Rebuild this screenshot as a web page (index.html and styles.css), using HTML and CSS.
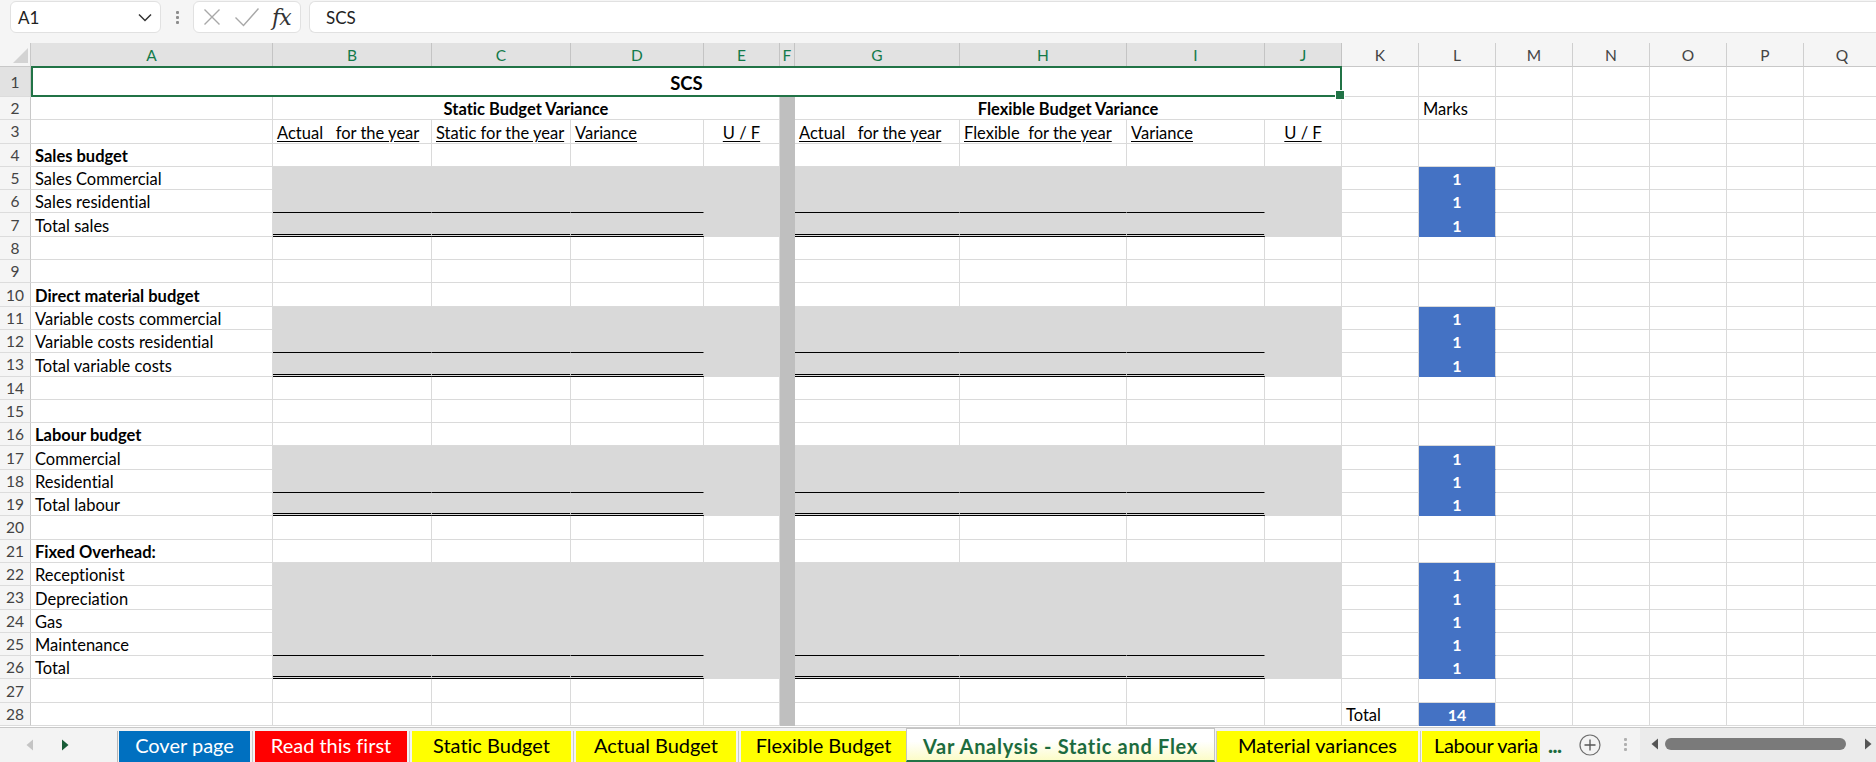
FILE: index.html
```html
<!DOCTYPE html>
<html>
<head>
<meta charset="utf-8">
<link rel="stylesheet" href="styles.css">
</head>
<body>
<div class="topbar">
  <div class="namebox"><span>A1</span><svg width="14" height="9" viewBox="0 0 14 9"><path d="M1 1.5 L7 7.5 L13 1.5" fill="none" stroke="#333" stroke-width="1.5"/></svg></div>
  <div class="grip"><i></i><i></i><i></i></div>
  <div class="fxbox">
    <svg class="ic-x" width="18" height="18" viewBox="0 0 18 18"><path d="M1.5 1.5 L16.5 16.5 M16.5 1.5 L1.5 16.5" fill="none" stroke="#a8a8a8" stroke-width="1.4"/></svg>
    <svg class="ic-ok" width="24" height="20" viewBox="0 0 24 20"><path d="M0.5 10.5 L8.5 18.5 L23.5 1.5" fill="none" stroke="#a8a8a8" stroke-width="1.4"/></svg>
    <span class="fx">fx</span>
  </div>
  <div class="formula">SCS</div>
</div>

<div class="sheet">
  <div class="corner"><svg width="30" height="23" viewBox="0 0 30 23"><path d="M28 5 L28 20 L13 20 Z" fill="#d3d3d3"/></svg></div>
  <div class="ch sel">A</div><div class="ch sel">B</div><div class="ch sel">C</div><div class="ch sel">D</div><div class="ch sel">E</div><div class="ch sel">F</div><div class="ch sel">G</div><div class="ch sel">H</div><div class="ch sel">I</div><div class="ch sel">J</div>
  <div class="ch">K</div><div class="ch">L</div><div class="ch">M</div><div class="ch">N</div><div class="ch">O</div><div class="ch">P</div><div class="ch">Q</div>

  <div class="rh rsel">1</div><div class="title">SCS</div><div></div><div></div><div></div><div></div><div></div><div></div><div></div>

  <div class="rh">2</div><div></div><div class="s4 b ctr">Static Budget Variance</div><div class="f"></div><div class="s4 b ctr">Flexible Budget Variance</div><div></div><div>Marks</div><div></div><div></div><div></div><div></div><div></div>

  <div class="rh">3</div><div></div><div class="u">Actual   for the year</div><div class="u">Static for the year</div><div class="u">Variance</div><div class="u ctr">U / F</div><div class="f"></div><div class="u">Actual   for the year</div><div class="u">Flexible  for the year</div><div class="u">Variance</div><div class="u ctr">U / F</div><div></div><div></div><div></div><div></div><div></div><div></div><div></div>

  <div class="rh">4</div><div class="b">Sales budget</div><div></div><div></div><div></div><div></div><div class="f"></div><div></div><div></div><div></div><div></div><div></div><div></div><div></div><div></div><div></div><div></div><div></div>

  <div class="rh">5</div><div>Sales Commercial</div><div class="g"></div><div class="g"></div><div class="g"></div><div class="g"></div><div class="f"></div><div class="g"></div><div class="g"></div><div class="g"></div><div class="g"></div><div></div><div class="m">1</div><div></div><div></div><div></div><div></div><div></div>

  <div class="rh">6</div><div>Sales residential</div><div class="g t"></div><div class="g t"></div><div class="g t"></div><div class="g"></div><div class="f"></div><div class="g t"></div><div class="g t"></div><div class="g t"></div><div class="g"></div><div></div><div class="m">1</div><div></div><div></div><div></div><div></div><div></div>

  <div class="rh">7</div><div>Total sales</div><div class="g d"></div><div class="g d"></div><div class="g d"></div><div class="g"></div><div class="f"></div><div class="g d"></div><div class="g d"></div><div class="g d"></div><div class="g"></div><div></div><div class="m">1</div><div></div><div></div><div></div><div></div><div></div>

  <div class="rh">8</div><div></div><div></div><div></div><div></div><div></div><div class="f"></div><div></div><div></div><div></div><div></div><div></div><div></div><div></div><div></div><div></div><div></div><div></div>

  <div class="rh">9</div><div></div><div></div><div></div><div></div><div></div><div class="f"></div><div></div><div></div><div></div><div></div><div></div><div></div><div></div><div></div><div></div><div></div><div></div>

  <div class="rh">10</div><div class="b">Direct material budget</div><div></div><div></div><div></div><div></div><div class="f"></div><div></div><div></div><div></div><div></div><div></div><div></div><div></div><div></div><div></div><div></div><div></div>

  <div class="rh">11</div><div>Variable costs commercial</div><div class="g"></div><div class="g"></div><div class="g"></div><div class="g"></div><div class="f"></div><div class="g"></div><div class="g"></div><div class="g"></div><div class="g"></div><div></div><div class="m">1</div><div></div><div></div><div></div><div></div><div></div>

  <div class="rh">12</div><div>Variable costs residential</div><div class="g t"></div><div class="g t"></div><div class="g t"></div><div class="g"></div><div class="f"></div><div class="g t"></div><div class="g t"></div><div class="g t"></div><div class="g"></div><div></div><div class="m">1</div><div></div><div></div><div></div><div></div><div></div>

  <div class="rh">13</div><div>Total variable costs</div><div class="g d"></div><div class="g d"></div><div class="g d"></div><div class="g"></div><div class="f"></div><div class="g d"></div><div class="g d"></div><div class="g d"></div><div class="g"></div><div></div><div class="m">1</div><div></div><div></div><div></div><div></div><div></div>

  <div class="rh">14</div><div></div><div></div><div></div><div></div><div></div><div class="f"></div><div></div><div></div><div></div><div></div><div></div><div></div><div></div><div></div><div></div><div></div><div></div>

  <div class="rh">15</div><div></div><div></div><div></div><div></div><div></div><div class="f"></div><div></div><div></div><div></div><div></div><div></div><div></div><div></div><div></div><div></div><div></div><div></div>

  <div class="rh">16</div><div class="b">Labour budget</div><div></div><div></div><div></div><div></div><div class="f"></div><div></div><div></div><div></div><div></div><div></div><div></div><div></div><div></div><div></div><div></div><div></div>

  <div class="rh">17</div><div>Commercial</div><div class="g"></div><div class="g"></div><div class="g"></div><div class="g"></div><div class="f"></div><div class="g"></div><div class="g"></div><div class="g"></div><div class="g"></div><div></div><div class="m">1</div><div></div><div></div><div></div><div></div><div></div>

  <div class="rh">18</div><div>Residential</div><div class="g t"></div><div class="g t"></div><div class="g t"></div><div class="g"></div><div class="f"></div><div class="g t"></div><div class="g t"></div><div class="g t"></div><div class="g"></div><div></div><div class="m">1</div><div></div><div></div><div></div><div></div><div></div>

  <div class="rh">19</div><div>Total labour</div><div class="g d"></div><div class="g d"></div><div class="g d"></div><div class="g"></div><div class="f"></div><div class="g d"></div><div class="g d"></div><div class="g d"></div><div class="g"></div><div></div><div class="m">1</div><div></div><div></div><div></div><div></div><div></div>

  <div class="rh">20</div><div></div><div></div><div></div><div></div><div></div><div class="f"></div><div></div><div></div><div></div><div></div><div></div><div></div><div></div><div></div><div></div><div></div><div></div>

  <div class="rh">21</div><div class="b">Fixed Overhead:</div><div></div><div></div><div></div><div></div><div class="f"></div><div></div><div></div><div></div><div></div><div></div><div></div><div></div><div></div><div></div><div></div><div></div>

  <div class="rh">22</div><div>Receptionist</div><div class="g"></div><div class="g"></div><div class="g"></div><div class="g"></div><div class="f"></div><div class="g"></div><div class="g"></div><div class="g"></div><div class="g"></div><div></div><div class="m">1</div><div></div><div></div><div></div><div></div><div></div>

  <div class="rh">23</div><div>Depreciation</div><div class="g"></div><div class="g"></div><div class="g"></div><div class="g"></div><div class="f"></div><div class="g"></div><div class="g"></div><div class="g"></div><div class="g"></div><div></div><div class="m">1</div><div></div><div></div><div></div><div></div><div></div>

  <div class="rh">24</div><div>Gas</div><div class="g"></div><div class="g"></div><div class="g"></div><div class="g"></div><div class="f"></div><div class="g"></div><div class="g"></div><div class="g"></div><div class="g"></div><div></div><div class="m">1</div><div></div><div></div><div></div><div></div><div></div>

  <div class="rh">25</div><div>Maintenance</div><div class="g t"></div><div class="g t"></div><div class="g t"></div><div class="g"></div><div class="f"></div><div class="g t"></div><div class="g t"></div><div class="g t"></div><div class="g"></div><div></div><div class="m">1</div><div></div><div></div><div></div><div></div><div></div>

  <div class="rh">26</div><div>Total</div><div class="g d"></div><div class="g d"></div><div class="g d"></div><div class="g"></div><div class="f"></div><div class="g d"></div><div class="g d"></div><div class="g d"></div><div class="g"></div><div></div><div class="m">1</div><div></div><div></div><div></div><div></div><div></div>

  <div class="rh">27</div><div></div><div></div><div></div><div></div><div></div><div class="f"></div><div></div><div></div><div></div><div></div><div></div><div></div><div></div><div></div><div></div><div></div><div></div>

  <div class="rh">28</div><div></div><div></div><div></div><div></div><div></div><div class="f"></div><div></div><div></div><div></div><div></div><div>Total</div><div class="m">14</div><div></div><div></div><div></div><div></div><div></div>
</div>

<div class="tabbar">
  <div class="nav">
    <svg width="8" height="12" viewBox="0 0 8 12" class="nav-l"><path d="M7 0.5 L7 11.5 L0.5 6 Z" fill="#c4c4c4"/></svg>
    <svg width="8" height="12" viewBox="0 0 8 12" class="nav-r"><path d="M1 0.5 L1 11.5 L7.5 6 Z" fill="#185c37"/></svg>
  </div>
  <div class="tab blue w-cover">Cover page</div>
  <div class="sep"></div>
  <div class="tab red w-read">Read this first</div>
  <div class="sep"></div>
  <div class="tab yellow w-static">Static Budget</div>
  <div class="sep"></div>
  <div class="tab yellow w-actual">Actual Budget</div>
  <div class="sep"></div>
  <div class="tab yellow w-flex">Flexible Budget</div>
  <div class="tab active w-var">Var Analysis - Static and Flex</div>
  <div class="sep sep-s"></div>
  <div class="tab yellow w-mat">Material variances</div>
  <div class="sep sep-m"></div>
  <div class="tab yellow w-lab clip">Labour varia</div>
  <div class="more">...</div>
  <svg class="add" width="22" height="22" viewBox="0 0 22 22"><circle cx="11" cy="11" r="10" fill="none" stroke="#6e6e6e" stroke-width="1.2"/><path d="M11 5.5 V16.5 M5.5 11 H16.5" stroke="#555" stroke-width="1.3"/></svg>
  <div class="grip2"><i></i><i></i><i></i></div>
  <div class="hscroll">
    <svg width="8" height="12" viewBox="0 0 8 12"><path d="M7 0.5 L7 11.5 L0.5 6 Z" fill="#555"/></svg>
    <div class="thumb"></div>
    <svg width="8" height="12" viewBox="0 0 8 12"><path d="M1 0.5 L1 11.5 L7.5 6 Z" fill="#555"/></svg>
  </div>
</div>
</body>
</html>
```

FILE: styles.css
```css
* { box-sizing: border-box; margin: 0; padding: 0; }
html, body { width: 1876px; height: 762px; overflow: hidden; background: #fff; }
body { font-family: Lato, "Noto Sans", sans-serif; color: #000; font-variant-ligatures: none; }

/* ---------- formula bar ---------- */
.topbar {
  height: 43px;
  background: #f5f5f5;
  display: flex;
  align-items: flex-start;
  padding: 1px 0 0 10px;
}
.namebox {
  width: 151px; height: 32px;
  background: #fff;
  border: 1px solid #e1e1e1;
  border-radius: 6px;
  display: flex; align-items: center; justify-content: space-between;
  padding: 0 8px 0 7px;
  font-size: 17px; color: #222;
}
.grip {
  width: 32px; height: 32px;
  display: flex; flex-direction: column; align-items: center; justify-content: center; gap: 2px;
}
.grip i { display: block; width: 3px; height: 3px; background: #8c8c8c; border-radius: 1px; }
.fxbox {
  width: 108px; height: 32px;
  background: #fff;
  border: 1px solid #e1e1e1;
  border-radius: 6px;
  display: flex; align-items: center;
  padding-left: 9px;
}
.ic-ok { margin-left: 14px; }
.fx {
  margin-left: 13px;
  font-family: "DejaVu Serif", "Liberation Serif", serif;
  font-style: italic;
  font-size: 22px;
  color: #333;
  letter-spacing: -1px;
}
.formula {
  flex: 1;
  margin-left: 8px;
  height: 32px;
  background: #fff;
  border: 1px solid #e1e1e1;
  border-right: none;
  border-radius: 6px 0 0 6px;
  display: flex; align-items: center;
  padding-left: 16px;
  font-size: 17px; color: #222;
}

/* ---------- grid ---------- */
.sheet {
  width: 1881px;
  height: 685px;
  overflow: hidden;
  display: grid;
  grid-template-columns: 31px 242px 159px 139px 133px 76px 15px 165px 167px 138px 77px 77px 77px 77px 77px 77px 77px 77px;
  grid-template-rows: 24px 30px repeat(27, 23.3px);
  border-bottom: 1px solid #c8c8c8;
  background: #fff;
}
.sheet > div {
  border-right: 1px solid #dadada;
  border-bottom: 1px solid #dadada;
  font-size: 16.5px;
  line-height: 20px;
  padding: 0 4px;
  white-space: pre;
  overflow: hidden;
  display: flex;
  align-items: flex-end;
}
.sheet > .corner {
  padding: 0;
  background: #f5f5f5;
  border-right-color: #c8c8c8;
  border-bottom-color: #c8c8c8;
  align-items: stretch;
}
.sheet > .ch {
  background: #f5f5f5;
  color: #444;
  font-size: 15.5px;
  justify-content: center;
  align-items: center;
  border-right-color: #cfcfcf;
  border-bottom-color: #c8c8c8;
  padding: 0;
}
.sheet > .ch.sel {
  background: #e2e2e2;
  color: #137a4a;
  border-right-color: #c4c4c4;
}
.sheet > .rh {
  background: #f5f5f5;
  color: #444;
  font-size: 15.5px;
  justify-content: center;
  align-items: center;
  border-right-color: #c8c8c8;
  border-bottom-color: #dcdcdc;
  padding: 0;
}
.sheet > .rsel { background: #e2e2e2; }

.sheet > .title {
  grid-column: span 10;
  border: 2px solid #217346;
  margin-top: -1px;
  justify-content: center;
  font-weight: 700;
  font-size: 18.5px;
  padding-bottom: 2px;
  position: relative;
  overflow: visible;
  z-index: 2;
}
.sheet > .title::after {
  content: "";
  position: absolute;
  right: -5px; bottom: -5px;
  width: 8px; height: 8px;
  background: #217346;
  border: 1px solid #fff;
}

.sheet > .s4 { grid-column: span 4; }
.sheet > .b { font-weight: 700; }
.sheet > .ctr { justify-content: center; }
.sheet > .u { text-decoration: underline; text-underline-offset: 2px; }

.sheet > .g { background: #d9d9d9; border-color: #d9d9d9; }
.sheet > .f { background: #bfbfbf; border-color: #bfbfbf; }
.sheet > .t { border-bottom: 1px solid #000; }
.sheet > .d { border-bottom: 3px double #000; }
.sheet > .m {
  background: #4472c4;
  border-bottom-color: #4472c4;
  color: #fff;
  font-weight: 700;
  font-size: 16px;
  justify-content: center;
}

/* ---------- sheet tabs ---------- */
.tabbar {
  height: 34px;
  background: #f3f3f3;
  display: flex;
  align-items: flex-end;
}
.nav {
  width: 118px; height: 31px;
  border-right: 1px solid #b8b8b8;
  display: flex; align-items: center;
  padding-bottom: 3px;
}
.nav-l { margin-left: 26px; }
.nav-r { margin-left: 27px; }
.tab {
  height: 31px;
  font-size: 20px;
  line-height: 22px;
  display: flex;
  justify-content: center;
  align-items: flex-start;
  padding-top: 3px;
  white-space: nowrap;
  overflow: hidden;
}
.w-cover { width: 131px; margin-left: 1px; }
.w-read { width: 152px; }
.w-static { width: 159px; }
.w-actual { width: 160px; }
.w-flex { width: 165px; }
.w-var { width: 309px; }
.w-mat { width: 201px; }
.w-lab { width: 118px; }
.blue { background: #0070c0; color: #fff; }
.red { background: #ff0000; color: #fff; }
.yellow { background: #ffff00; color: #000; }
.active {
  height: 34px;
  padding-top: 6px;
  background: linear-gradient(to bottom, #ffffff 0%, #ffffff 40%, #fcfcc8 100%);
  border: 1px solid #c4c4c4;
  border-bottom: 2px solid #217346;
  color: #1c6b3f;
  font-weight: 700;
  letter-spacing: 0.7px;
}
.clip { justify-content: flex-start; padding-left: 12px; letter-spacing: -0.3px; }
.sep { width: 5px; height: 31px; display: flex; justify-content: center; }
.sep::before { content: ""; width: 1px; height: 100%; background: #c8c8c8; }
.sep-s { width: 2px; }
.sep-m { width: 4px; }
.more {
  width: 18px; margin-left: 8px;
  height: 31px;
  color: #1c6b3f;
  font-weight: 900;
  font-size: 21px;
  line-height: 22px;
  padding-top: 3px;
  letter-spacing: -0.5px;
}
.add { margin-left: 13px; margin-bottom: 6px; }
.grip2 {
  width: 4px; margin-left: 22px; height: 31px;
  display: flex; flex-direction: column; align-items: center; justify-content: center; gap: 2px;
  padding-bottom: 4px;
}
.grip2 i { display: block; width: 3px; height: 3px; background: #b0b0b0; border-radius: 1px; }
.hscroll {
  flex: 1;
  margin-left: 13px;
  height: 34px;
  background: #ebebeb;
  display: flex; align-items: center;
  padding-left: 11px;
  padding-bottom: 2px;
}
.thumb {
  width: 181px; height: 12px;
  background: #7a7a7a;
  border-radius: 6px;
  margin-left: 6px;
  margin-right: 18px;
}
```
